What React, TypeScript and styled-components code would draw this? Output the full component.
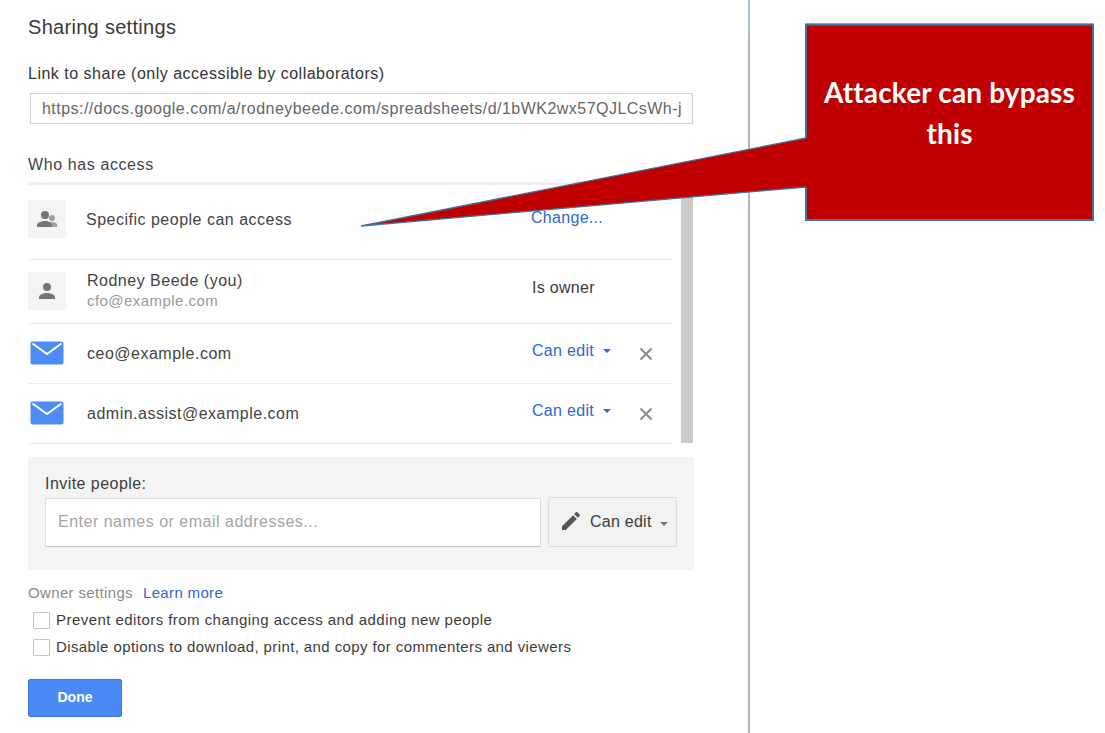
import React from "react";
import styled, { createGlobalStyle } from "styled-components";

const Global = createGlobalStyle`
  html, body { margin: 0; padding: 0; background: #fff; }
  body { font-family: "Liberation Sans", Arial, sans-serif; color: #3c3c3c; overflow: hidden; }
`;

const Page = styled.div`
  position: relative;
  display: flex;
  width: 1105px;
  height: 733px;
  overflow: hidden;
  background: #fff;
`;

const Dialog = styled.div`
  width: 666px;
  padding: 15px 54px 0 28px;
  display: flex;
  flex-direction: column;
  flex: none;
`;

const Divider = styled.div`
  width: 2px;
  flex: none;
  background: linear-gradient(#a9bbd6 0, #a9bbd6 37px, #b4b4b4 37px);
`;

const Title = styled.div`
  font-size: 20px;
  line-height: 24px;
  letter-spacing: 0.3px;
  color: #3a3a3a;
`;

const FieldLabel = styled.div`
  margin-top: 24px;
  font-size: 16px;
  line-height: 22px;
  letter-spacing: 0.5px;
  color: #333;
`;

const LinkBox = styled.div`
  margin: 8px 1px 0 2px;
  height: 29px;
  border: 1px solid #d0d0d0;
  padding: 0 11px 0 11px;
  font-size: 16px;
  line-height: 29px;
  letter-spacing: 0.47px;
  color: #666;
  white-space: nowrap;
  overflow: hidden;
`;

const SectionLabel = styled.div`
  margin-top: 30px;
  font-size: 16px;
  line-height: 22px;
  letter-spacing: 0.6px;
  color: #444;
`;

const Rule = styled.div`
  margin-top: 6px;
  height: 3px;
  background: #efefef;
`;

const ListArea = styled.div`
  display: flex;
  height: 258px;
`;

const List = styled.div`
  width: 645px;
  flex: none;
`;

const Scrollbar = styled.div`
  width: 12px;
  margin-left: 8px;
  height: 258px;
  background: #cbcbcb;
`;

const Row = styled.div<{ $h: number; $pb?: number }>`
  display: grid;
  grid-template-columns: 59px 445px 106px 1fr;
  align-items: center;
  height: ${(p) => p.$h}px;
  padding-bottom: ${(p) => p.$pb ?? 0}px;
  box-sizing: border-box;
  border-bottom: 1px solid #ececec;
`;

const IconTile = styled.div`
  width: 38px;
  height: 38px;
  background: #f4f4f4;
  display: flex;
  align-items: center;
  justify-content: center;
`;

const Mail = styled.svg`
  width: 34px;
  height: 24px;
  margin: 0 0 2px 2px;
  display: block;
`;

const Name = styled.div`
  font-size: 16px;
  line-height: 20px;
  letter-spacing: 0.5px;
  color: #444;
`;

const AccessName = styled(Name)`
  margin: 2px 0 0 -1px;
`;

const Sub = styled.div`
  font-size: 15px;
  line-height: 19px;
  letter-spacing: 0.45px;
  color: #999;
`;

const Perm = styled.div<{ $link?: boolean }>`
  font-size: 16px;
  line-height: 20px;
  letter-spacing: 0.3px;
  color: ${(p) => (p.$link ? "#2e68d0" : "#3c3c3c")};
  display: flex;
  align-items: center;
  gap: 9px;
  margin-bottom: 5px;
`;

const ChangeLink = styled(Perm)`
  margin: 0 0 2px -1px;
`;

const Caret = styled.span<{ $color: string }>`
  width: 0;
  height: 0;
  border-left: 4px solid transparent;
  border-right: 4px solid transparent;
  border-top: 4px solid ${(p) => p.$color};
`;

const SplitCaret = styled(Caret)`
  margin: 3px 0 0 8px;
`;

const CloseIcon = styled.svg`
  width: 16px;
  height: 16px;
  display: block;
`;

const InvitePanel = styled.div`
  margin-top: 14px;
  height: 113px;
  box-sizing: border-box;
  padding: 17px 17px 0;
  background: #f4f4f4;
`;

const InviteLabel = styled.div`
  font-size: 16px;
  line-height: 20px;
  letter-spacing: 0.45px;
  color: #3c3c3c;
`;

const InviteRow = styled.div`
  display: flex;
  gap: 7px;
  margin-top: 4px;
  align-items: flex-start;
`;

const InviteInput = styled.div`
  width: 496px;
  height: 49px;
  box-sizing: border-box;
  background: #fff;
  border: 1px solid #dcdcdc;
  border-bottom-color: #c4c4c4;
  padding-left: 12px;
  font-size: 16px;
  line-height: 45px;
  letter-spacing: 0.5px;
  color: #a5a5a5;
`;

const RoleButton = styled.div`
  width: 129px;
  height: 50px;
  margin-top: -1px;
  box-sizing: border-box;
  border: 1px solid #dcdcdc;
  border-radius: 2px;
  background: #f2f2f2;
  display: flex;
  align-items: center;
  padding-left: 10px;
  font-size: 16px;
  letter-spacing: 0.25px;
  color: #3c3c3c;
`;

const Pencil = styled.svg`
  width: 24px;
  height: 24px;
  margin: -2px 7px 0 0;
  flex: none;
`;

const OwnerLine = styled.div`
  margin-top: 13px;
  display: flex;
  gap: 10px;
  font-size: 15px;
  line-height: 20px;
  letter-spacing: 0.35px;
`;

const Muted = styled.span`
  color: #8a8a8a;
`;

const LinkText = styled.span`
  color: #2e68d0;
`;

const CheckRow = styled.div<{ $mt: number; $ls: number }>`
  display: flex;
  align-items: center;
  margin: ${(p) => p.$mt}px 0 0 5px;
  font-size: 15px;
  line-height: 20px;
  letter-spacing: ${(p) => p.$ls}px;
  color: #3c3c3c;
`;

const Box = styled.span`
  width: 15px;
  height: 15px;
  border: 1px solid #c6c6c6;
  border-radius: 1px;
  background: #fff;
  margin-right: 6px;
  flex: none;
`;

const Done = styled.div`
  margin-top: 22px;
  width: 94px;
  height: 38px;
  box-sizing: border-box;
  border: 1px solid #3a78e0;
  border-radius: 2px;
  background: #4a8af4;
  color: #fff;
  font-size: 14px;
  font-weight: bold;
  line-height: 35px;
  text-align: center;
`;

const CalloutShape = styled.svg`
  position: absolute;
  left: 0;
  top: 0;
  width: 1105px;
  height: 733px;
  pointer-events: none;
`;

const CalloutText = styled.div`
  position: absolute;
  left: 806px;
  top: 72px;
  width: 287px;
  text-align: center;
  font-family: Lato, "Open Sans", sans-serif;
  font-weight: 700;
  font-size: 28px;
  line-height: 41px;
  letter-spacing: 0.15px;
  color: #fff;
`;

const Person = () => (
  <svg width="24" height="24" viewBox="0 0 24 24" fill="#757575">
    <circle cx="12" cy="8" r="4" />
    <path d="M12 14c-3.6 0-8 1.7-8 4v2h16v-2c0-2.3-4.4-4-8-4z" />
  </svg>
);

const People = () => (
  <svg width="24" height="24" viewBox="0 0 24 24">
    <circle cx="17" cy="11" r="3" fill="#a0a0a0" />
    <path d="M17 15c-2.500 0-5 1-5 2.800V20h10v-2.200C22 16 19.500 15 17 15z" fill="#a0a0a0" />
    <circle cx="10" cy="8" r="4" fill="#757575" />
    <path d="M10 14c-3.500 0-8 1.600-8 4v2h15v-2c0-2.400-3.500-4-7-4z" fill="#757575" />
  </svg>
);

const MailIcon = () => (
  <Mail viewBox="0 0 34 24">
    <rect x="0.500" y="0.500" width="33" height="23" rx="2" fill="#4d8bf9" />
    <path d="M2.500 2.500 L17 13 L31.500 2.500" fill="none" stroke="#fff" strokeWidth="2" />
  </Mail>
);

const Close = () => (
  <CloseIcon viewBox="0 0 16 16">
    <path d="M2.500 2.500 L13.500 13.500 M13.500 2.500 L2.500 13.500" stroke="#8a8a8a" strokeWidth="2" fill="none" />
  </CloseIcon>
);

const EmailRow = ({ email }: { email: string }) => (
  <Row $h={60}>
    <MailIcon />
    <Name>{email}</Name>
    <Perm $link>
      Can edit <Caret $color="#2e68d0" />
    </Perm>
    <Close />
  </Row>
);

export default function App() {
  return (
    <Page>
      <Global />
      <Dialog>
        <Title>Sharing settings</Title>
        <FieldLabel>Link to share (only accessible by collaborators)</FieldLabel>
        <LinkBox>https://docs.google.com/a/rodneybeede.com/spreadsheets/d/1bWK2wx57QJLCsWh-j</LinkBox>
        <SectionLabel>Who has access</SectionLabel>
        <Rule />
        <ListArea>
          <List>
            <Row $h={75} $pb={6}>
              <IconTile><People /></IconTile>
              <AccessName>Specific people can access</AccessName>
              <ChangeLink $link>Change...</ChangeLink>
            </Row>
            <Row $h={64} $pb={2}>
              <IconTile><Person /></IconTile>
              <div>
                <Name>Rodney Beede (you)</Name>
                <Sub>cfo@example.com</Sub>
              </div>
              <Perm>Is owner</Perm>
            </Row>
            <EmailRow email="ceo@example.com" />
            <EmailRow email="admin.assist@example.com" />
          </List>
          <Scrollbar />
        </ListArea>
        <InvitePanel>
          <InviteLabel>Invite people:</InviteLabel>
          <InviteRow>
            <InviteInput>Enter names or email addresses...</InviteInput>
            <RoleButton>
              <Pencil viewBox="0 0 24 24" fill="#555">
                <path d="M3 17.250V21h3.750L17.810 9.940l-3.750-3.750L3 17.250zM20.710 7.040a1 1 0 0 0 0-1.410l-2.340-2.340a1 1 0 0 0-1.410 0l-1.830 1.830 3.750 3.750 1.830-1.830z" />
              </Pencil>
              Can edit
              <SplitCaret $color="#777" />
            </RoleButton>
          </InviteRow>
        </InvitePanel>
        <OwnerLine>
          <Muted>Owner settings</Muted>
          <LinkText>Learn more</LinkText>
        </OwnerLine>
        <CheckRow $mt={7} $ls={0.45}>
          <Box />
          Prevent editors from changing access and adding new people
        </CheckRow>
        <CheckRow $mt={7} $ls={0.4}>
          <Box />
          Disable options to download, print, and copy for commenters and viewers
        </CheckRow>
        <Done>Done</Done>
      </Dialog>
      <Divider />
      <CalloutShape viewBox="0 0 1105 733">
        <path
          d="M806 24.500 H1093 V220 H806 V187 L361 226 L806 138 Z"
          fill="#c00000"
          stroke="#41719c"
          strokeWidth="1.300"
          strokeLinejoin="bevel"
        />
        <path d="M806 138 V24.500 H1093 V220 H806 V187" fill="none" stroke="#41719c" strokeWidth="2" />
      </CalloutShape>
      <CalloutText>
        Attacker can bypass
        <br />
        this
      </CalloutText>
    </Page>
  );
}
